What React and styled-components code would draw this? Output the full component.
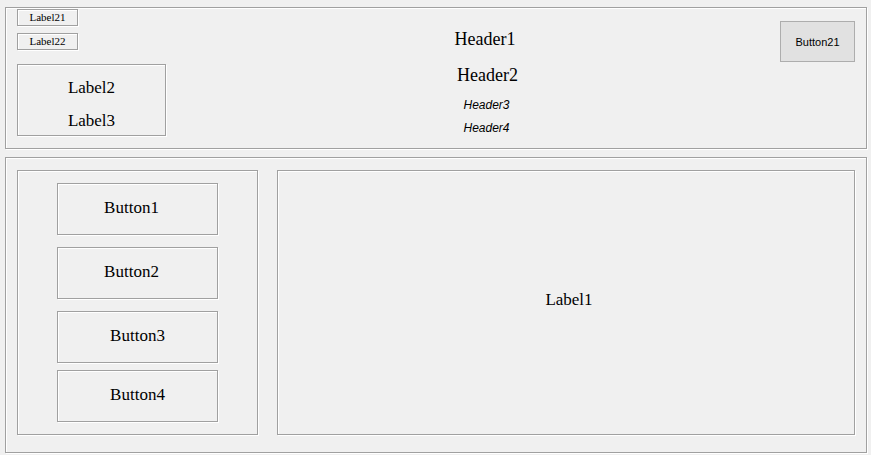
import styled, { createGlobalStyle } from "styled-components";

const GlobalStyle = createGlobalStyle`
  html, body {
    margin: 0;
    padding: 0;
    background-color: #f0f0f0;
  }
  * {
    box-sizing: border-box;
  }
`;

const etched = `
  border: 1px solid #a0a0a0;
  box-shadow: inset 1px 1px 0 #ffffff, 1px 1px 0 #ffffff;
`;

const Page = styled.div`
  width: 871px;
  height: 455px;
  padding: 7px 4px 0 5px;
  display: flex;
  flex-direction: column;
  gap: 8px;
  background-color: #f0f0f0;
  font-family: "Liberation Serif", "Times New Roman", serif;
  color: #000;
`;

const TopPanel = styled.div`
  ${etched}
  height: 142px;
  padding: 1px 11px 0;
  display: flex;
  align-items: flex-start;
`;

const LeftColumn = styled.div`
  width: 149px;
  display: flex;
  flex-direction: column;
  align-items: flex-start;
`;

const SmallLabel = styled.div`
  ${etched}
  width: 61px;
  height: 17px;
  margin-top: ${(props) => props.offset || 0}px;
  display: flex;
  align-items: center;
  justify-content: center;
  font-size: 11px;
  line-height: 13px;
`;

const LabelBox = styled.div`
  ${etched}
  width: 149px;
  height: 72px;
  margin-top: 14px;
  padding-top: 13px;
  display: flex;
  flex-direction: column;
  align-items: center;
  gap: 14px;
`;

const BoxLabel = styled.div`
  font-size: 17px;
  line-height: 19px;
  height: 19px;
`;

const HeaderColumn = styled.div`
  flex: 1;
  padding: 20px 0 0 27px;
  display: flex;
  flex-direction: column;
  align-items: center;
`;

const Header = styled.div`
  font-size: 18px;
  line-height: 20px;
  height: 20px;
  margin-top: ${(props) => props.offset || 0}px;
  margin-left: ${(props) => props.shift || 0}px;
`;

const SubHeader = styled.div`
  font-family: "Liberation Sans", Arial, sans-serif;
  font-style: italic;
  font-size: 12px;
  line-height: 14px;
  height: 14px;
  margin-top: ${(props) => props.offset || 0}px;
`;

const SystemButton = styled.button`
  width: 75px;
  height: 41px;
  margin-top: 12px;
  padding: 0;
  background-color: #e1e1e1;
  border: 1px solid #adadad;
  border-radius: 0;
  font-family: "Liberation Sans", Arial, sans-serif;
  font-size: 11px;
  color: #000;
`;

const BottomPanel = styled.div`
  ${etched}
  height: 296px;
  padding: 12px 11px 17px;
  display: flex;
  gap: 19px;
`;

const ButtonPanel = styled.div`
  ${etched}
  width: 241px;
  padding: 12px 0 0 39px;
  display: flex;
  flex-direction: column;
  align-items: flex-start;
`;

const PanelButton = styled.div`
  ${etched}
  width: 161px;
  height: 52px;
  margin-top: ${(props) => props.offset || 0}px;
  padding: 0 ${(props) => (props.left ? 12 : 0)}px 4px 0;
  display: flex;
  align-items: center;
  justify-content: center;
  font-size: 17px;
  line-height: 19px;
`;

const ContentPanel = styled.div`
  ${etched}
  flex: 1;
  padding: 0 0 7px 6px;
  display: flex;
  align-items: center;
  justify-content: center;
  font-size: 17px;
  line-height: 19px;
`;

export default function App() {
  return (
    <>
      <GlobalStyle />
      <Page>
        <TopPanel>
          <LeftColumn>
            <SmallLabel>Label21</SmallLabel>
            <SmallLabel offset={7}>Label22</SmallLabel>
            <LabelBox>
              <BoxLabel>Label2</BoxLabel>
              <BoxLabel>Label3</BoxLabel>
            </LabelBox>
          </LeftColumn>
          <HeaderColumn>
            <Header shift={-3}>Header1</Header>
            <Header offset={16} shift={2}>Header2</Header>
            <SubHeader offset={13}>Header3</SubHeader>
            <SubHeader offset={9}>Header4</SubHeader>
          </HeaderColumn>
          <SystemButton>Button21</SystemButton>
        </TopPanel>
        <BottomPanel>
          <ButtonPanel>
            <PanelButton left>Button1</PanelButton>
            <PanelButton left offset={12}>Button2</PanelButton>
            <PanelButton offset={12}>Button3</PanelButton>
            <PanelButton offset={7}>Button4</PanelButton>
          </ButtonPanel>
          <ContentPanel>Label1</ContentPanel>
        </BottomPanel>
      </Page>
    </>
  );
}
